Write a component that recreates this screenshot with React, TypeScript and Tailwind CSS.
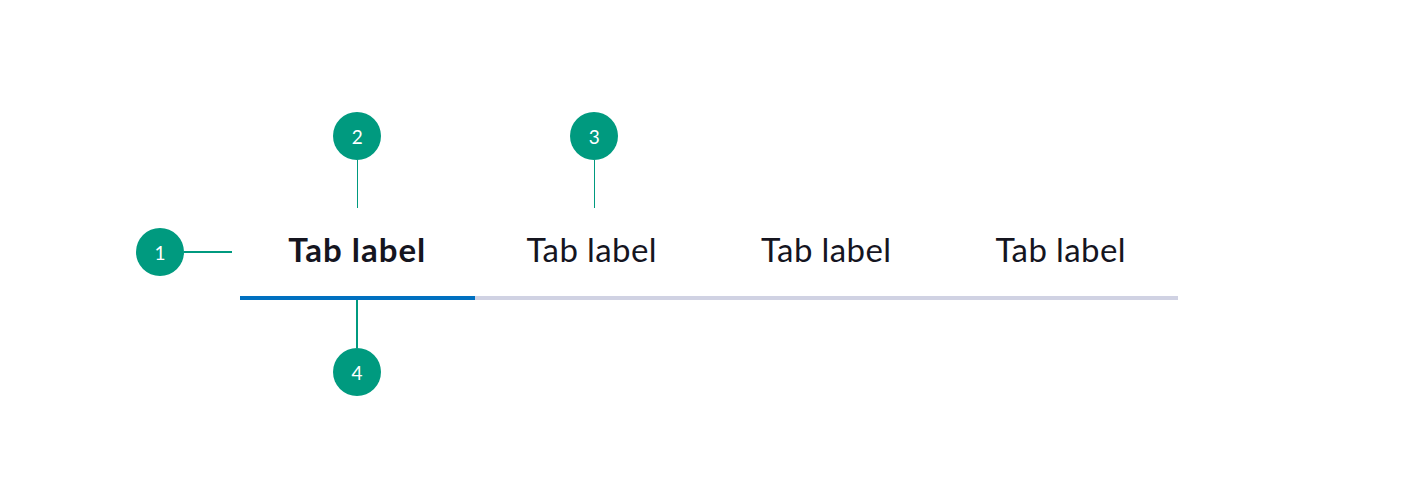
import React from "react";

function Badge({ n }: { n: number }) {
  return (
    <div
      className="w-[48px] h-[48px] shrink-0 rounded-full bg-[#009a7f] text-white flex items-center justify-center text-[19px] leading-none"
      style={{ fontFamily: 'Lato, "Liberation Sans", sans-serif' }}
    >
      {n}
    </div>
  );
}

function VStem() {
  return <div className="w-[1.5px] h-[48px] bg-[#009a7f]" />;
}

export default function App() {
  const tabs = ["Tab label", "Tab label", "Tab label", "Tab label"];
  return (
    <div className="w-full h-[500px] bg-white overflow-hidden pt-[112px] pl-[136px]">
      <div className="flex flex-col">
        {/* top annotations */}
        <div className="ml-[104px] w-[938px] grid grid-cols-4">
          <div className="flex flex-col items-center">
            <Badge n={2} />
            <VStem />
          </div>
          <div className="flex flex-col items-center pl-[5px]">
            <Badge n={3} />
            <VStem />
          </div>
        </div>

        {/* tabs row with annotation 1 */}
        <div className="flex items-start">
          <div className="flex items-center mt-[20px] mr-[8px]">
            <Badge n={1} />
            <div className="w-[48px] h-[1.5px] bg-[#009a7f]" />
          </div>
          <div
            className="w-[938px] grid grid-cols-4"
            style={{ fontFamily: 'Lato, "Noto Sans", "Liberation Sans", sans-serif' }}
          >
            {tabs.map((t, i) => (
              <div
                key={i}
                className={`h-[92px] border-b-4 pt-[21px] text-center text-[33px] leading-[40px] text-[#15151f] ${
                  i === 0
                    ? "border-[#0070c0] font-bold tracking-[1px]"
                    : "border-[#d0d2e3] font-normal tracking-[0.4px]"
                }`}
              >
                {t}
              </div>
            ))}
          </div>
        </div>

        {/* bottom annotation */}
        <div className="ml-[104px] w-[234px] flex flex-col items-center">
          <VStem />
          <Badge n={4} />
        </div>
      </div>
    </div>
  );
}
